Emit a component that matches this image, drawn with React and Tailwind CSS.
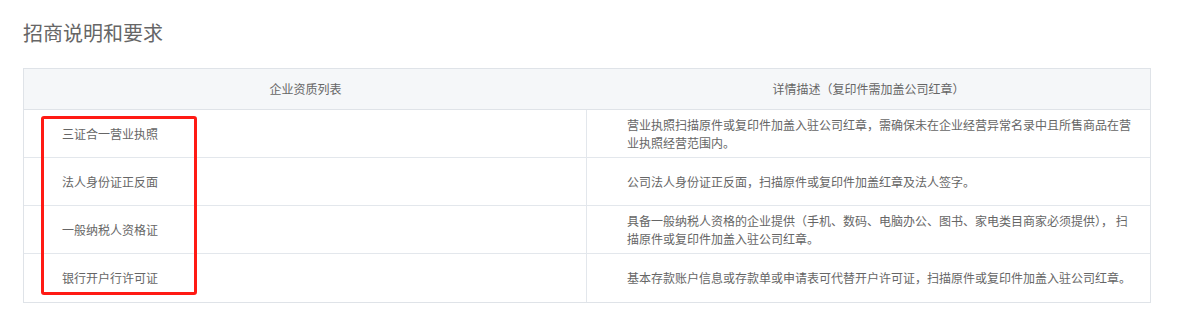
import React from "react";

const rows = [
  {
    name: "三证合一营业执照",
    desc: (
      <>
        营业执照扫描原件或复印件加盖入驻公司红章，需确保未在企业经营异常名录中且所售商品在营
        <br />
        业执照经营范围内。
      </>
    ),
  },
  {
    name: "法人身份证正反面",
    desc: "公司法人身份证正反面，扫描原件或复印件加盖红章及法人签字。",
  },
  {
    name: "一般纳税人资格证",
    desc: (
      <>
        具备一般纳税人资格的企业提供（手机、数码、电脑办公、图书、家电类目商家必须提供）， 扫
        <br />
        描原件或复印件加盖入驻公司红章。
      </>
    ),
  },
  {
    name: "银行开户行许可证",
    desc: "基本存款账户信息或存款单或申请表可代替开户许可证，扫描原件或复印件加盖入驻公司红章。",
  },
];

export default function App() {
  return (
    <div
      className="bg-white w-[1188px] h-[317px] pl-[23px] pt-[19px] text-[#666]"
      style={{ fontFamily: '"Noto Sans CJK SC", "Noto Sans", sans-serif' }}
    >
      <h2 className="text-[20px] leading-[28px] font-normal text-[#666]">招商说明和要求</h2>

      <div className="relative mt-[21px] w-[1128px] border border-[#dfe3e8] text-[12px]">
        <div className="grid grid-cols-[563px_1fr] h-[41px] bg-[#f5f7f9] border-b border-[#dfe3e8]">
          <div className="flex items-center justify-center">企业资质列表</div>
          <div className="flex items-center justify-center">详情描述（复印件需加盖公司红章）</div>
        </div>

        {rows.map((row, i) => (
          <div
            key={row.name}
            className={`grid grid-cols-[563px_1fr] h-[48px] ${
              i < rows.length - 1 ? "border-b border-[#e3e7ec]" : ""
            }`}
          >
            <div className="flex items-center pl-[38px] border-r border-[#e3e7ec]">{row.name}</div>
            <div className="flex items-center pl-[40px] pr-[10px] leading-[18px]">
              <p>{row.desc}</p>
            </div>
          </div>
        ))}

        {/* red highlight around the first column */}
        <div className="absolute left-[17px] top-[47px] w-[156px] h-[179px] border-[3px] border-[#ff1a14] rounded-[3px] pointer-events-none" />
      </div>
    </div>
  );
}
